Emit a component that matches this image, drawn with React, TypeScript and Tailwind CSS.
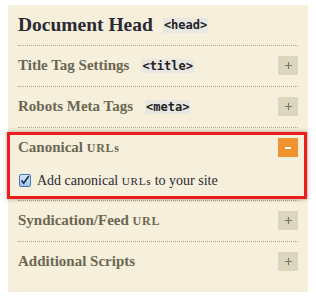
import React from 'react';

const serif = { fontFamily: '"Liberation Serif", Georgia, serif' };

const Toggle: React.FC<{ open?: boolean }> = ({ open }) =>
  open ? (
    <span className="flex h-[19px] w-[20px] shrink-0 items-center justify-center bg-[#f0922d]">
      <span className="block h-[2px] w-[6px] bg-white" />
    </span>
  ) : (
    <span className="flex h-[19px] w-[20px] shrink-0 items-center justify-center bg-[#dcd6bd]">
      <svg width="9" height="9" viewBox="0 0 9 9">
        <path d="M4.5 1v7M1 4.5h7" stroke="#77776f" strokeWidth="1.2" />
      </svg>
    </span>
  );

const Code: React.FC<{ children: React.ReactNode; gap?: string }> = ({ children, gap = 'ml-[12px]' }) => (
  <code
    className={`${gap} bg-[#e9e7e2] px-[1px] text-[12px] font-bold leading-[15px] text-[#222]`}
    style={{ fontFamily: '"DejaVu Sans Mono", monospace' }}
  >
    {children}
  </code>
);

const Abbr: React.FC<{ children: React.ReactNode }> = ({ children }) => (
  <span className="text-[0.8em] tracking-[0.06em]">{children}</span>
);

const Section: React.FC<{ title: React.ReactNode; last?: boolean }> = ({ title, last }) => (
  <div className={`pt-[10px] pb-[11px] ${last ? '' : 'border-b border-dotted border-[#b3a67c]'}`}>
    <div className="flex h-[19px] items-center justify-between">
      <span className="text-[15px] font-bold text-[#6c6752]">{title}</span>
      <Toggle />
    </div>
  </div>
);

export default function App() {
  return (
    <div className="h-[298px] w-[316px] bg-white pt-[5px] pl-[8px]" style={serif}>
      <div className="w-[300px] bg-[#f5efdb] px-[10px] pb-[10px]">
        <div className="flex h-[41px] items-center border-b border-dotted border-[#b3a67c]">
          <h1 className="text-[19.5px] font-bold text-[#2a2a33]">Document Head</h1>
          <Code gap="ml-[10px]">&lt;head&gt;</Code>
        </div>

        <Section title={<>Title Tag Settings<Code>&lt;title&gt;</Code></>} />
        <Section title={<>Robots Meta Tags<Code>&lt;meta&gt;</Code></>} />

        <div className="relative border-b border-dotted border-[#b3a67c] pt-[10px] pb-[12px]">
          <div className="flex h-[19px] items-center justify-between">
            <span className="text-[15px] font-bold text-[#6c6752]">
              Canonical <Abbr>URLs</Abbr>
            </span>
            <Toggle open />
          </div>
          <label className="mt-[15px] flex h-[16px] items-center gap-[6px] pl-[1px] text-[14px] text-[#2a2a33]">
            <span className="flex h-[13px] w-[12px] items-center justify-center rounded-[2px] border border-[#4a78b8] bg-gradient-to-b from-[#d6e8fb] to-[#9cc4ee]">
              <svg width="10" height="10" viewBox="0 0 10 10">
                <path d="M1.5 5.5l2.2 2.6L8.8 1" fill="none" stroke="#1d2a44" strokeWidth="1.6" />
              </svg>
            </span>
            <span>
              Add canonical <Abbr>URLs</Abbr> to your site
            </span>
          </label>
          <div className="pointer-events-none absolute top-[4px] right-[-9px] bottom-[1px] left-[-11px] border-[3px] border-[#ef1c1c] shadow-[0_0_4px_rgba(0,0,0,0.35)]" />
        </div>

        <Section title={<>Syndication/Feed <Abbr>URL</Abbr></>} />
        <Section title="Additional Scripts" last />
      </div>
    </div>
  );
}
